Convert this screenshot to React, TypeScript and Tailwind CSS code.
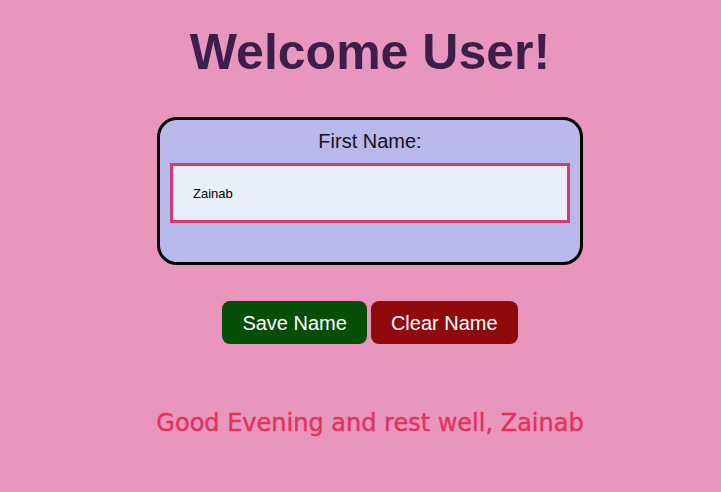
import { useState } from "react";

const App = () => {
  const [name, setName] = useState<string>("Zainab");
  const [saved, setSaved] = useState<string>("Zainab");

  return (
    <div className="min-h-screen w-full bg-[#e896be] flex flex-col items-center pl-[19px] font-['Liberation_Sans',Arial,sans-serif]">
      <h1 className="mt-[24px] text-[50px] leading-[57px] font-bold text-[#3c1e4a]">
        Welcome User!
      </h1>

      <div className="mt-[36px] w-[426px] h-[148px] rounded-[20px] border-[3px] border-black bg-[#b8b8ea] flex flex-col items-center pt-[10px] px-[10px]">
        <label htmlFor="first" className="text-[20px] leading-[23px] text-[#1a0f1f]">
          First Name:
        </label>
        <input
          id="first"
          value={name}
          onChange={(e) => setName(e.target.value)}
          className="mt-[10px] w-[400px] h-[60px] border-[3px] border-[#d43a6f] bg-[#e8effb] pl-[20px] text-[13px] text-black outline-none"
        />
      </div>

      <div className="mt-[36px] flex gap-[4px]">
        <button
          onClick={() => setSaved(name)}
          className="h-[43px] px-[20px] rounded-[8px] bg-[#064d06] text-white text-[20px]"
        >
          Save Name
        </button>
        <button
          onClick={() => {
            setName("");
            setSaved("");
          }}
          className="h-[43px] px-[20px] rounded-[8px] bg-[#8e0a0d] text-white text-[20px]"
        >
          Clear Name
        </button>
      </div>

      <p className="mt-[65px] text-[24px] leading-[28px] text-[#e2335a] [-webkit-text-stroke:0.4px_#e2335a] font-['DejaVu_Sans',Verdana,sans-serif]">
        Good Evening and rest well, {saved}
      </p>
    </div>
  );
};

export default App;
